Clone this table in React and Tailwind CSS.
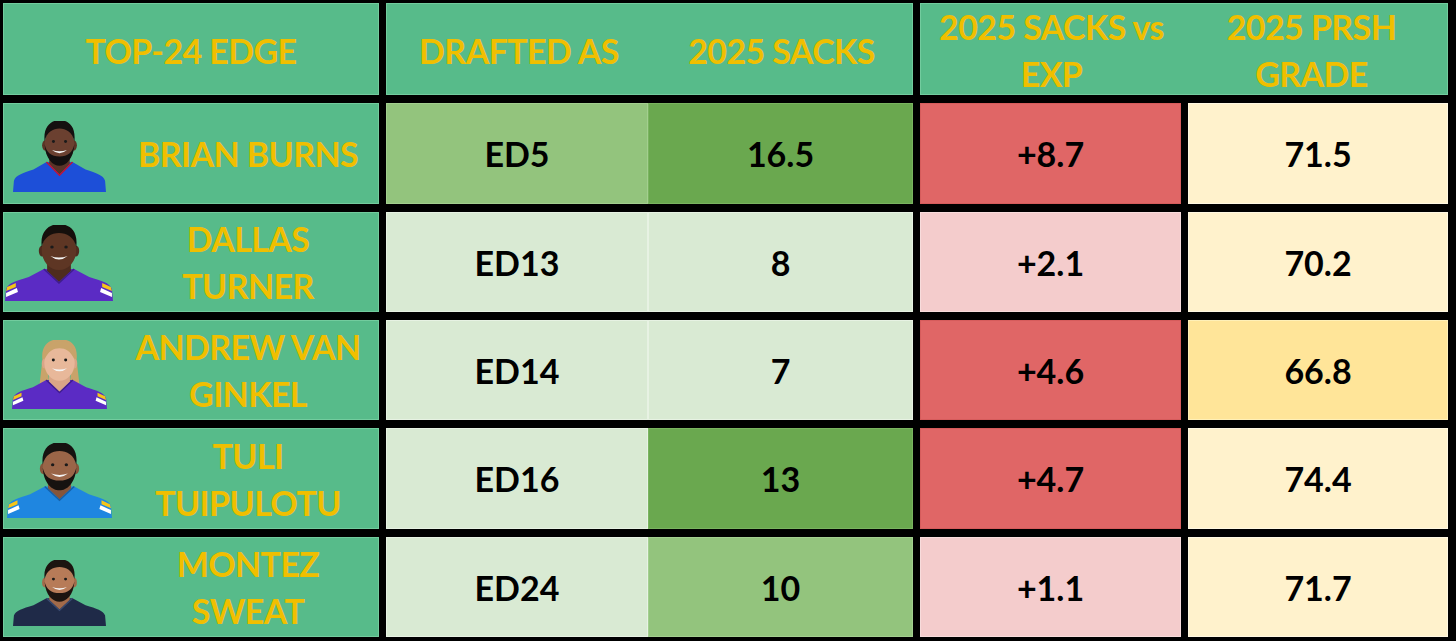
import React from "react";

const FONT = { fontFamily: "Lato, 'Open Sans', 'Liberation Sans', sans-serif" };

function Headshot({ w, h, skin, shade, hair, jersey, trim, long, beard = true, stripes }) {
  return (
    <svg width={w} height={h} viewBox="0 0 100 76" preserveAspectRatio="none">
      {long && (
        <path
          d="M32 22 C30 3 42 -1 50 -1 C59 -1 70 3 68 22 L72 58 C68 64 60 62 60 54 L63 30 C59 18 41 18 37 30 L40 54 C40 62 32 64 28 58 Z"
          fill={hair}
        />
      )}
      <path d="M0 76 L1 64 C3 58 10 56 22 52 L36 44 L64 44 L78 52 C90 56 97 58 99 64 L100 76 Z" fill={jersey} />
      {stripes && (
        <g>
          <path d="M90 58 L98 62 L99 66 L90 62 Z" fill={stripes[0]} />
          <path d="M89 63 L99 68 L99 72 L88 67 Z" fill={stripes[1]} />
          <path d="M10 58 L2 62 L1 66 L10 62 Z" fill={stripes[0]} />
          <path d="M11 63 L1 68 L1 72 L12 67 Z" fill={stripes[1]} />
        </g>
      )}
      <path d="M39 34 L39 46 L50 57 L61 46 L61 34 Z" fill={shade} />
      <path d="M36 44 L50 58 L64 44" fill="none" stroke={trim} strokeWidth="1.5" />
      <ellipse cx="34.5" cy="26" rx="3.2" ry="5.5" fill={shade} />
      <ellipse cx="65.5" cy="26" rx="3.2" ry="5.5" fill={shade} />
      <ellipse cx="50" cy="25" rx="16" ry="20" fill={skin} />
      {long ? (
        <path d="M34 22 C34 5 43 1 50 1 C58 1 67 5 66 22 C62 12 56 9 50 9 C44 9 38 12 34 22 Z" fill={hair} />
      ) : (
        <path d="M34 22 C32 4 43 -1 50 -1 C58 -1 68 4 66 22 C64 12 57 8 50 8 C43 8 36 12 34 22 Z" fill={hair} />
      )}
      {beard && (
        <path d="M34 25 C35 41 43 48 50 48 C57 48 65 41 66 25 C64 34 59 38 50 38 C41 38 36 34 34 25 Z" fill={hair} />
      )}
      <circle cx="43.5" cy="22" r="1.6" fill="#1a1a1a" />
      <circle cx="56.5" cy="22" r="1.6" fill="#1a1a1a" />
      <path d="M42 31 Q50 38 58 31 Q50 34 42 31 Z" fill="#f5f5f5" />
    </svg>
  );
}

const pale = "#d9ead3";
const cream = "#fff2cc";
const red = "#e06666";
const pink = "#f4cccc";

const rows = [
  {
    name: ["BRIAN BURNS"],
    photo: { w: 93, h: 71, pb: "pb-[11px]", skin: "#6b4030", shade: "#5a3426", hair: "#141010", jersey: "#1d4fd8", trim: "#c8102e" },
    drafted: "ED5", dBg: "#93c47d", dBd: "#a3cf8f",
    sacks: "16.5", sBg: "#6aa84f", sBd: "#7ab460",
    exp: "+8.7", eBg: red, eBd: "#d65c5c",
    grade: "71.5", gBg: cream, gBd: "#fff8e2",
  },
  {
    name: ["DALLAS", "TURNER"],
    photo: { w: 108, h: 76, pb: "pb-[10px]", skin: "#5e3624", shade: "#4e2c1e", hair: "#150f0c", jersey: "#5b2bc4", trim: "#3f1d8c", beard: false, stripes: ["#f5c518", "#ffffff"] },
    drafted: "ED13", dBg: pale, dBd: "#e7f2e3",
    sacks: "8", sBg: pale, sBd: "#e7f2e3",
    exp: "+2.1", eBg: pink, eBd: "#f8dcdc",
    grade: "70.2", gBg: cream, gBd: "#fff8e2",
  },
  {
    name: ["ANDREW VAN", "GINKEL"],
    photo: { w: 95, h: 69, pb: "pb-[10px]", skin: "#e8b89a", shade: "#d9a587", hair: "#c9a36a", jersey: "#5b2bc4", trim: "#3f1d8c", beard: false, long: true, stripes: ["#f5c518", "#ffffff"] },
    drafted: "ED14", dBg: pale, dBd: "#e7f2e3",
    sacks: "7", sBg: pale, sBd: "#e7f2e3",
    exp: "+4.6", eBg: red, eBd: "#d65c5c",
    grade: "66.8", gBg: "#ffe599", gBd: "#fff0b8",
  },
  {
    name: ["TULI", "TUIPULOTU"],
    photo: { w: 105, h: 75, pb: "pb-[10px]", skin: "#9a6548", shade: "#85553b", hair: "#161210", jersey: "#1f86e0", trim: "#1660a8", stripes: ["#f5c518", "#ffffff"] },
    drafted: "ED16", dBg: pale, dBd: "#e7f2e3",
    sacks: "13", sBg: "#6aa84f", sBd: "#7ab460",
    exp: "+4.7", eBg: red, eBd: "#d65c5c",
    grade: "74.4", gBg: cream, gBd: "#fff8e2",
  },
  {
    name: ["MONTEZ", "SWEAT"],
    photo: { w: 93, h: 66, pb: "pb-[10px]", skin: "#b77b58", shade: "#a26a4a", hair: "#1c1410", jersey: "#1f2a48", trim: "#3a4a70" },
    drafted: "ED24", dBg: pale, dBd: "#e7f2e3",
    sacks: "10", sBg: "#93c47d", sBd: "#a3cf8f",
    exp: "+1.1", eBg: pink, eBd: "#f8dcdc",
    grade: "71.7", gBg: cream, gBd: "#fff8e2",
  },
];

function Cell({ bg, bd, children, className = "" }) {
  return (
    <div
      className={`flex items-center justify-center border text-[34px] font-bold leading-[47px] text-black ${className}`}
      style={{ backgroundColor: bg, borderColor: bd }}
    >
      {children}
    </div>
  );
}

export default function App() {
  return (
    <div
      className="w-[1456px] h-[641px] bg-black pt-[3px] pl-[3px] pr-[8px] pb-[4px] overflow-hidden"
      style={FONT}
    >
      <div className="grid grid-cols-[376px_527px_261px_260px] grid-rows-[92px_101px_100px_100px_101px_100px] gap-x-[7px] gap-y-[8px]">
        {/* header */}
        <div className="flex items-center justify-center pt-[3px] bg-[#57bb8a] border border-[#72cc9e] text-[34px] font-bold leading-[47px] tracking-[-0.6px] text-[#f0bf00]">
          TOP-24 EDGE
        </div>
        <div className="flex pt-[3px] bg-[#57bb8a] border border-[#72cc9e] text-[34px] font-bold leading-[47px] tracking-[-0.6px] text-[#f0bf00]">
          <div className="w-[264px] flex items-center justify-center">DRAFTED AS</div>
          <div className="flex-1 flex items-center justify-center">2025 SACKS</div>
        </div>
        <div className="col-span-2 flex pt-[2px] bg-[#57bb8a] border border-[#72cc9e] text-[34px] font-bold leading-[47px] tracking-[-0.6px] text-[#f0bf00]">
          <div className="w-[261px] flex items-center justify-center text-center">
            2025 SACKS vs
            <br />
            EXP
          </div>
          <div className="flex-1 flex items-center justify-center text-center pr-[6px]">
            2025 PRSH
            <br />
            GRADE
          </div>
        </div>

        {rows.map((r) => (
          <React.Fragment key={r.drafted}>
            <div className="flex bg-[#57bb8a] border border-[#72cc9e]">
              <div className={`w-[110px] shrink-0 flex items-end justify-center ${r.photo.pb}`}>
                <Headshot {...r.photo} />
              </div>
              <div className="flex-1 flex items-center justify-center pl-[4px] text-center text-[34px] font-bold leading-[47px] tracking-[-0.6px] text-[#f0bf00]">
                <div>
                  {r.name.map((n) => (
                    <div key={n}>{n}</div>
                  ))}
                </div>
              </div>
            </div>
            <div className="flex">
              <Cell bg={r.dBg} bd={r.dBd} className="w-[262px]">
                {r.drafted}
              </Cell>
              <Cell bg={r.sBg} bd={r.sBd} className="flex-1">
                {r.sacks}
              </Cell>
            </div>
            <Cell bg={r.eBg} bd={r.eBd}>
              {r.exp}
            </Cell>
            <Cell bg={r.gBg} bd={r.gBd}>
              {r.grade}
            </Cell>
          </React.Fragment>
        ))}
      </div>
    </div>
  );
}
